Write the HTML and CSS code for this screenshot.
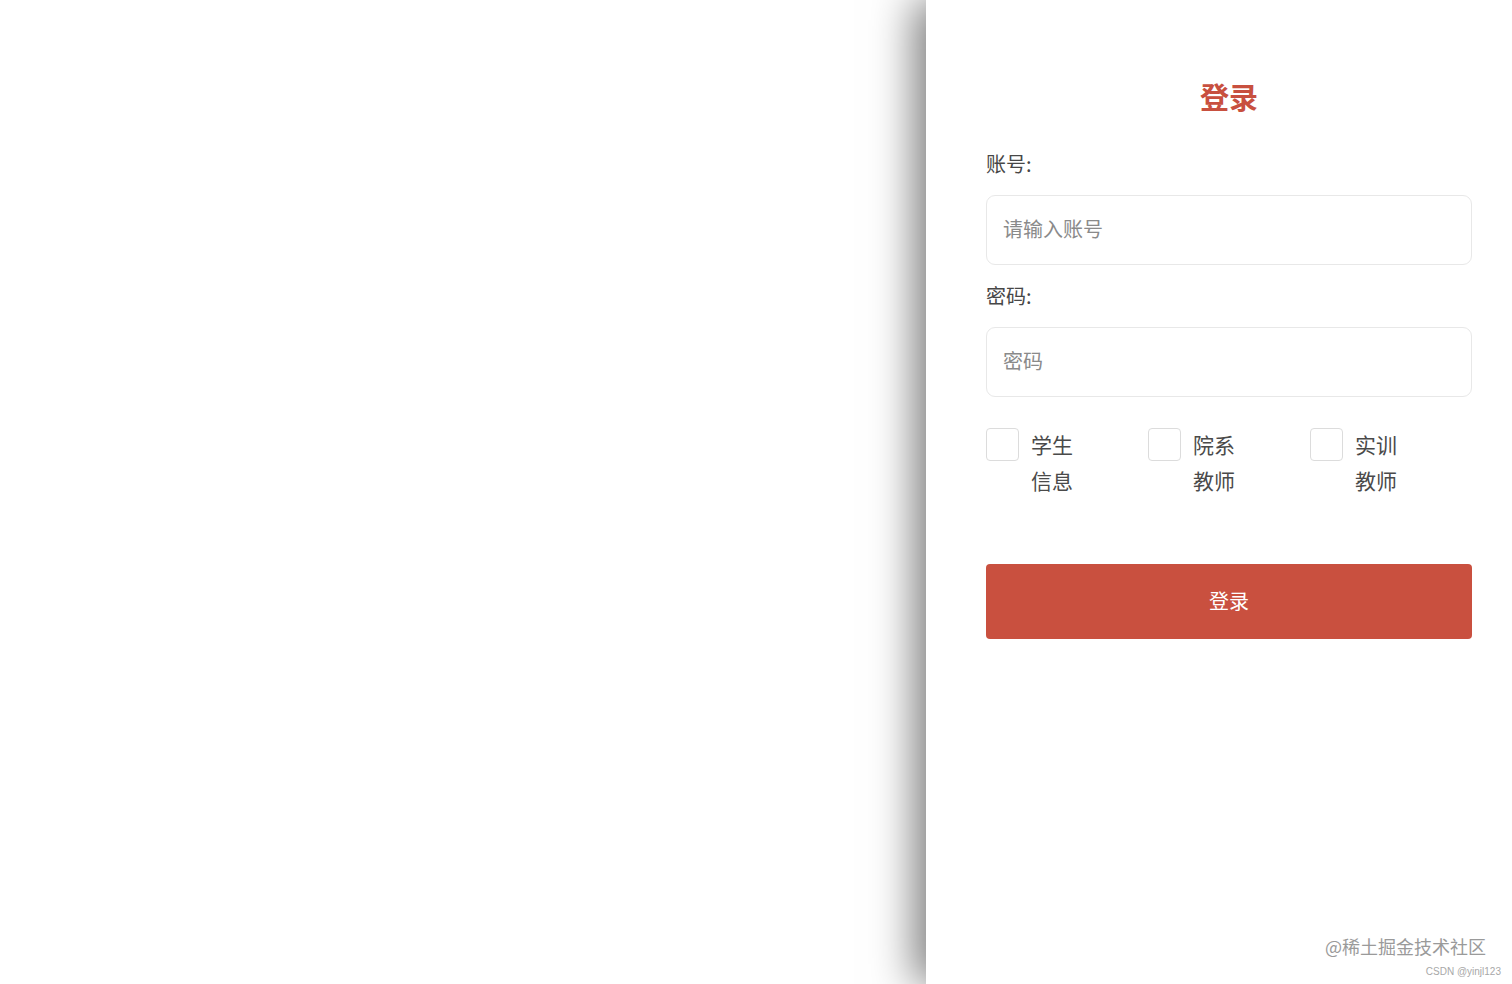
FILE: index.html
```html
<!DOCTYPE html>
<html lang="zh-CN">
<head>
<meta charset="utf-8">
<title>登录</title>
<link rel="stylesheet" href="styles.css">
</head>
<body>
<div class="page">
  <div class="blank"></div>
  <div class="panel">
    <h1 class="title">登录</h1>
    <div class="field-label">账号:</div>
    <div class="input"><span class="placeholder">请输入账号</span></div>
    <div class="field-label">密码:</div>
    <div class="input"><span class="placeholder">密码</span></div>
    <div class="roles">
      <label class="role"><span class="box"></span><span class="role-text">学生信息</span></label>
      <label class="role"><span class="box"></span><span class="role-text">院系教师</span></label>
      <label class="role"><span class="box"></span><span class="role-text">实训教师</span></label>
    </div>
    <div class="btn"><span class="btn-text">登录</span></div>
  </div>
</div>
<div class="watermark">
  <div class="wm-main">@稀土掘金技术社区</div>
  <div class="wm-sub">CSDN @yinjl123</div>
</div>
</body>
</html>
```
FILE: styles.css
```css
* { box-sizing: border-box; }
html, body { margin: 0; padding: 0; height: 100%; background: #fff; }
body { font-family: "Noto Sans CJK SC", "Noto Sans", sans-serif; overflow: hidden; }
.page { display: flex; height: 984px; }
.blank { flex: 1; background: #fff; }
.panel {
  width: 586px;
  height: 984px;
  background: #fff;
  padding: 78px 40px 0 60px;
  box-shadow: -12px 0 40px rgba(0,0,0,0.5);
  position: relative;
  z-index: 1;
}
.title {
  margin: 0;
  height: 36px;
  line-height: 36px;
  text-align: center;
  font-size: 29px;
  font-weight: 700;
  color: #c8503f;
}
.field-label {
  margin-top: 16px;
  height: 30px;
  line-height: 30px;
  font-size: 20px;
  color: #474747;
}
.title + .field-label { margin-top: 35px; }
.input {
  margin-top: 16px;
  height: 70px;
  border: 1px solid #e8e8e8;
  border-radius: 9px;
  display: flex;
  align-items: center;
  padding: 0 0 4px 16px;
}
.placeholder { font-size: 20px; color: #8a8a8a; }
.roles {
  margin-top: 31px;
  display: grid;
  grid-template-columns: repeat(3, 1fr);
}
.role { display: flex; align-items: flex-start; gap: 12px; }
.box {
  width: 33px;
  height: 33px;
  border: 1px solid #dcdcdc;
  border-radius: 4px;
  flex: none;
}
.role-text {
  width: 44px;
  margin-top: -2px;
  font-size: 21px;
  line-height: 36px;
  color: #4a4a4a;
}
.btn {
  margin-top: 66px;
  height: 75px;
  background: #c9503f;
  border-radius: 4px;
  color: #fff;
  font-size: 20px;
  display: flex;
  align-items: center;
  justify-content: center;
}
.btn-text { margin-top: -2px; }
.watermark {
  position: absolute;
  right: 11px;
  bottom: 5px;
  text-align: right;
  z-index: 2;
}
.wm-main { font-size: 18px; line-height: 24px; color: #9a9a9a; margin-right: 15px; }
.wm-sub { font-size: 10px; line-height: 14px; color: #a8a8a8; margin-top: 7px; font-family: "Liberation Sans", sans-serif; }
```
